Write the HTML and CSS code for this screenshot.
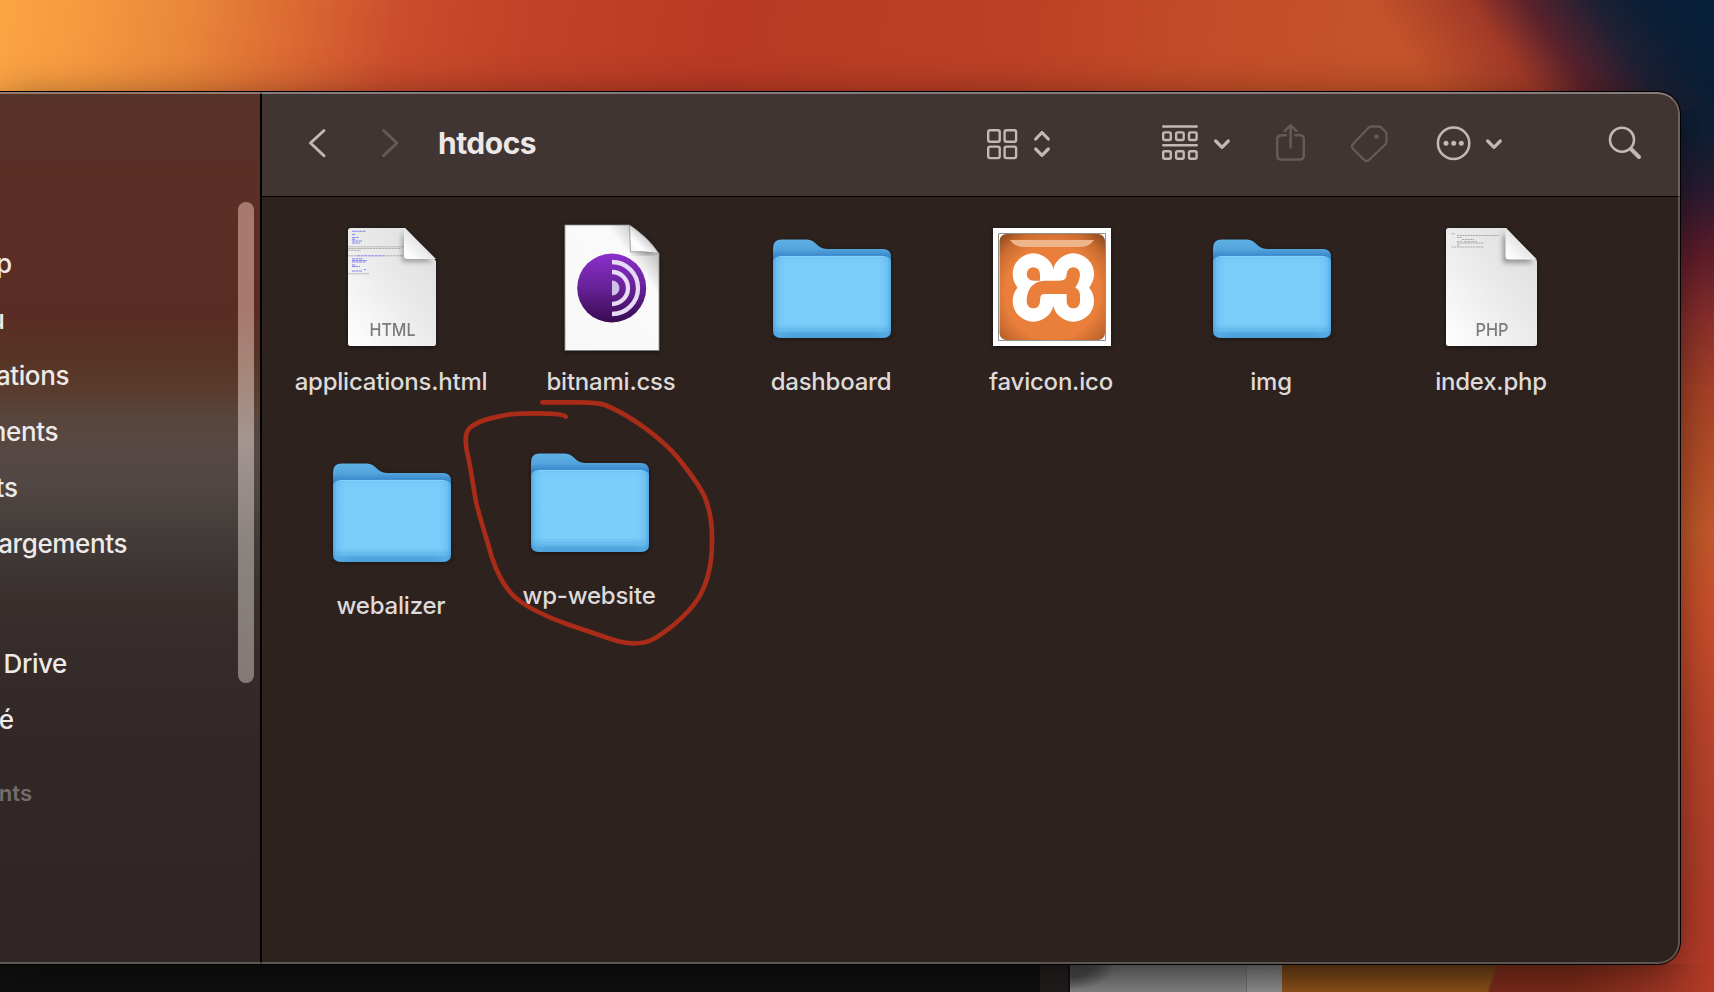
FILE: index.html
```html
<!DOCTYPE html>
<html lang="fr">
<head>
<meta charset="utf-8">
<title>htdocs</title>
<link rel="stylesheet" href="styles.css">
</head>
<body class="desktop">
<svg class="defs" width="0" height="0">
  <defs>
    <linearGradient id="back" gradientUnits="userSpaceOnUse" x1="0" y1="16" x2="0" y2="38"><stop offset="0" stop-color="#5fb0e3"/><stop offset=".45" stop-color="#54a5de"/><stop offset=".8" stop-color="#3785c9"/><stop offset="1" stop-color="#3785c9"/></linearGradient>
    <linearGradient id="front" x1="0" y1="0" x2="0" y2="1"><stop offset="0" stop-color="#74c6f6"/><stop offset=".1" stop-color="#7bcdfa"/><stop offset=".83" stop-color="#7bcdfa"/><stop offset=".845" stop-color="#74c6f5"/><stop offset=".87" stop-color="#74c6f5"/><stop offset=".875" stop-color="#64b8ea"/><stop offset=".895" stop-color="#6abded"/><stop offset=".93" stop-color="#5eb2e6"/><stop offset=".935" stop-color="#54a8df"/><stop offset="1" stop-color="#4a9fda"/></linearGradient>
    <linearGradient id="side" x1="0" y1="0" x2="1" y2="0"><stop offset="0" stop-color="#3f98d8" stop-opacity=".75"/><stop offset=".03" stop-color="#55ade6" stop-opacity=".4"/><stop offset=".12" stop-color="#7bcdfa" stop-opacity="0"/><stop offset=".88" stop-color="#7bcdfa" stop-opacity="0"/><stop offset=".97" stop-color="#55ade6" stop-opacity=".4"/><stop offset="1" stop-color="#3f98d8" stop-opacity=".75"/></linearGradient>
    <linearGradient id="paper" x1="1" y1="0" x2="0" y2="1"><stop offset="0" stop-color="#dcdcdc"/><stop offset=".5" stop-color="#ebebeb"/><stop offset="1" stop-color="#fff"/></linearGradient>
    <linearGradient id="fold" x1="1" y1="0" x2="0" y2="1"><stop offset=".4" stop-color="#dedede"/><stop offset=".8" stop-color="#fafafa"/><stop offset="1" stop-color="#fff"/></linearGradient>
    <linearGradient id="curl" x1="1" y1="0" x2="0" y2="1"><stop offset=".4" stop-color="#c8c8c8"/><stop offset=".7" stop-color="#fff"/><stop offset="1" stop-color="#f4f4f4"/></linearGradient>
    <linearGradient id="tor" x1="0" y1="0" x2="0" y2="1"><stop offset="0" stop-color="#8b2fcb"/><stop offset=".45" stop-color="#6b239c"/><stop offset="1" stop-color="#370b52"/></linearGradient>
    <linearGradient id="sheet" x1="1" y1="0" x2="0" y2="1"><stop offset=".15" stop-color="#c9c9c9"/><stop offset=".28" stop-color="#fafafa"/><stop offset="1" stop-color="#f8f8f8"/></linearGradient>
    <radialGradient id="xampp" cx=".5" cy=".55" r=".72"><stop offset=".62" stop-color="#e97f3b"/><stop offset=".82" stop-color="#c96b2f"/><stop offset="1" stop-color="#8d4a20"/></radialGradient>
    <filter id="soft" x="-30%" y="-30%" width="160%" height="160%"><feGaussianBlur stdDeviation="2.5"/></filter>
    <symbol id="folder" viewBox="0 0 128 128">
      <path fill="url(#back)" d="M6 25Q6 16.500 14.500 16.500H40C49 16.500 50 26 60 26H116Q124 26 124 34V60H6Z"/>
      <path fill="url(#front)" d="M6 40.500Q6 33 14 33H116Q124 33 124 40.500V107Q124 115 116 115H14Q6 115 6 107Z"/>
      <path fill="url(#side)" d="M6 40.500Q6 33 14 33H116Q124 33 124 40.500V107Q124 115 116 115H14Q6 115 6 107Z"/>
      <path stroke="#8fd6fb" stroke-width=".8" fill="none" d="M13 33.400H117"/>
    </symbol>
  </defs>
</svg>

<main class="window">
  <aside class="sidebar">
    <nav class="places">
      <div class="place w-airdrop">p</div>
      <div class="place w-bureau">u</div>
      <div class="place w-apps">ations</div>
      <div class="place w-docs">ments</div>
      <div class="place w-recents">ts</div>
      <div class="place w-downloads">argements</div>
      <div class="place w-drive">Drive</div>
      <div class="place w-shared">é</div>
      <div class="heading">nts</div>
    </nav>
    <div class="scrollbar"></div>
  </aside>

  <section class="content">
    <header class="toolbar">
      <svg class="ic back" width="20" height="40" viewBox="307 123 20 40"><path stroke-width="2.900" d="M324 130.500 310.500 143 324 155.700"/></svg>
      <svg class="ic dim forward" width="20" height="40" viewBox="380 123 20 40"><path stroke-width="2.900" d="M383.500 130.500 397 143 383.500 155.700"/></svg>
      <h1 class="title">htdocs</h1>
      <svg class="ic view" width="64" height="40" viewBox="987 123 64 40"><g stroke-width="2.400"><rect x="988.200" y="130.200" width="11.500" height="11.500" rx="1.800"/><rect x="1004.600" y="130.200" width="11.500" height="11.500" rx="1.800"/><rect x="988.200" y="146.600" width="11.500" height="11.500" rx="1.800"/><rect x="1004.600" y="146.600" width="11.500" height="11.500" rx="1.800"/></g><path stroke-width="3.200" d="M1035.700 139 1042 132.500 1048.300 139M1035.700 149 1042 155.300 1048.300 149"/></svg>
      <svg class="ic group" width="70" height="40" viewBox="1161 123 70 40"><path stroke-width="2.400" d="M1163.200 126.500H1196.800M1163.200 145.300H1196.800"/><g stroke-width="2.400"><rect x="1163.200" y="132.400" width="7.600" height="7.600" rx="1.500"/><rect x="1176.100" y="132.400" width="7.600" height="7.600" rx="1.500"/><rect x="1189" y="132.400" width="7.600" height="7.600" rx="1.500"/><rect x="1163.200" y="151.200" width="7.600" height="7.600" rx="1.500"/><rect x="1176.100" y="151.200" width="7.600" height="7.600" rx="1.500"/><rect x="1189" y="151.200" width="7.600" height="7.600" rx="1.500"/></g><path stroke-width="3.200" d="M1215.700 141 1222 147.300 1228.300 141"/></svg>
      <svg class="ic dim share" width="32" height="40" viewBox="1275 122 32 40"><path stroke-width="2.500" d="M1286 134.200H1281.500Q1277.200 134.200 1277.200 138.500V154.300Q1277.200 158.600 1281.500 158.600H1299.500Q1303.800 158.600 1303.800 154.300V138.500Q1303.800 134.200 1299.500 134.200H1295.200M1290.600 146.500V124.500M1284.700 130 1290.600 124.200 1296.500 130"/></svg>
      <svg class="ic dim tag" width="40" height="40" viewBox="1350 123 40 40"><path stroke-width="2.300" d="M1371 126.500H1378.500Q1380.500 126.500 1381.800 127.900L1385 131.200Q1386.500 132.800 1386.500 134.800V141.500Q1386.500 143.300 1385.300 144.500L1369 160Q1366.600 162 1364.200 160L1353 148.700Q1351 146.300 1353 144L1368.500 127.700Q1369.600 126.500 1371 126.500Z"/><circle cx="1376.500" cy="136.500" r="2.300" class="dot"/></svg>
      <svg class="ic more" width="68" height="40" viewBox="1436 123 68 40"><circle cx="1453.600" cy="143.200" r="15.700" stroke-width="2.500"/><circle class="dot" cx="1446" cy="143.300" r="2.500"/><circle class="dot" cx="1453.700" cy="143.300" r="2.500"/><circle class="dot" cx="1461.300" cy="143.300" r="2.500"/><path stroke-width="3.200" d="M1487.700 141 1494 147.300 1500.300 141"/></svg>
      <svg class="ic search" width="36" height="40" viewBox="1607 123 36 40"><circle cx="1622" cy="139.700" r="12" stroke-width="2.600"/><path stroke-width="4" d="M1631.500 149.500 1639 157"/></svg>
    </header>

    <div class="files">
      <figure class="file">
        <svg class="icon" width="128" height="128" viewBox="0 0 128 128">
          <path fill="url(#paper)" d="M23.500 5H78L109 38V120.500Q109 123 106.500 123H23.500Q21 123 21 120.500V7.500Q21 5 23.500 5Z"/>
          <g stroke-width=".9" fill="none"><path stroke="#7a7aea" stroke-dasharray="3 .5" d="M25 8.300H39M25 11.500H28M25 14.500H32M25 16.300H28M25 18H35M25 20H33M30 32.800H57M25 35.800H36M25 37.500H40M25 39H39M25 42H29M25 43.500H33M25 48H35"/><path stroke="#aaa" stroke-dasharray="2.500 .6" d="M21 23.800H77M21 25.500H74M21 27.300H34M21 32.800H30M57 32.800H77M21 50.800H42"/><path stroke="#2468c8" d="M37 46.500H38.500"/></g>
          <path filter="url(#soft)" opacity=".3" d="M75 10V39H106Z"/>
          <path fill="url(#fold)" d="M78 5 109 36H80Q77 36 77 33V6Z"/>
          <text class="kind" x="65.500" y="113" textLength="46" lengthAdjust="spacingAndGlyphs">HTML</text>
        </svg>
        <figcaption class="name">applications.html</figcaption>
      </figure>
      <figure class="file">
        <svg class="icon" width="128" height="128" viewBox="0 0 128 128">
          <path fill="url(#sheet)" stroke="#777" stroke-width=".8" d="M17.900 1.900H82L112.100 30V127.600H17.900Z"/>
          <path filter="url(#soft)" opacity=".4" d="M83 31H111L100 26Z"/>
          <path fill="url(#curl)" stroke="#8a8a8a" stroke-width=".8" d="M82.500 2C92 8 106 20 111.500 30.500Q97 28 83.500 28.800Z"/>
          <circle cx="64.700" cy="65" r="34.500" fill="url(#tor)"/>
          <g fill="none" stroke="#e6daf5" stroke-width="4.300"><path d="M65 39A26 26 0 0 1 65 91"/><path d="M65 49A16 16 0 0 1 65 81"/></g><path fill="#cfc0e6" d="M65 57.500A7.500 7.500 0 0 1 65 72.500Z"/>
        </svg>
        <figcaption class="name">bitnami.css</figcaption>
      </figure>
      <figure class="file">
        <svg class="icon" width="128" height="128"><use href="#folder"/></svg>
        <figcaption class="name">dashboard</figcaption>
      </figure>
      <figure class="file">
        <svg class="icon" width="128" height="128" viewBox="0 0 128 128">
          <path fill="#fff" d="M6 5H124V123H6Z"/>
          <path fill="none" stroke="#8f8f8f" stroke-width="1" d="M11.500 10.500H118.500V117.500H11.500Z"/>
          <rect x="12.500" y="11" width="105.500" height="106" rx="7" fill="url(#xampp)"/>
          <path fill="#efb489" d="M23 17H107Q102 24 94 24H36Q28 24 23 17Z"/>
          <g transform="translate(-247 -13) scale(.33333)">
            <g fill="#fff"><circle cx="880" cy="192" r="62"/><circle cx="880" cy="273" r="62"/><circle cx="1000" cy="192" r="62"/><circle cx="1000" cy="273" r="62"/><path d="M832 190H1048V274H832Z"/></g>
            <path fill="#e97f3b" d="M880 172A20 20 0 0 1 900 192V212H880A20 20 0 0 1 880 172Z"/>
            <path fill="none" stroke="#e97f3b" stroke-width="40" stroke-linecap="round" stroke-linejoin="round" d="M880 275Q880 232 915 232H985"/>
            <path fill="#e97f3b" d="M960 212Q980 212 980 192A20 20 0 0 1 1020 192Q1020 212 1006 233Q1020 240 1020 256V275A20 20 0 0 1 980 275V252H960Z"/>
          </g>
        </svg>
        <figcaption class="name">favicon.ico</figcaption>
      </figure>
      <figure class="file">
        <svg class="icon" width="128" height="128"><use href="#folder"/></svg>
        <figcaption class="name">img</figcaption>
      </figure>
      <figure class="file">
        <svg class="icon" width="128" height="128" viewBox="0 0 128 128">
          <path fill="url(#paper)" d="M21.500 5H79L110 38V120.500Q110 123 107.500 123H21.500Q19 123 19 120.500V7.500Q19 5 21.500 5Z"/>
          <path fill="none" stroke="#999" stroke-width=".8" stroke-dasharray="2 .7" d="M24.500 10.700H28M30 12.500H72M30 14.500H35M35 16.500H47M30 18.700H35M37 18.700H50M30 20H57M30 22H33M24.500 24H57"/>
          <path filter="url(#soft)" opacity=".35" d="M76 10V40H107Z"/>
          <path fill="url(#fold)" d="M79 5 110 36.500H82Q78.500 36.500 78.500 33V6Z"/>
          <text class="kind" x="65" y="113" textLength="33" lengthAdjust="spacingAndGlyphs">PHP</text>
        </svg>
        <figcaption class="name">index.php</figcaption>
      </figure>
      <figure class="file">
        <svg class="icon" width="128" height="128"><use href="#folder"/></svg>
        <figcaption class="name">webalizer</figcaption>
      </figure>
      <figure class="file moved">
        <svg class="icon" width="128" height="128"><use href="#folder"/></svg>
        <figcaption class="name">wp-website</figcaption>
      </figure>
    </div>
  </section>
</main>

<div class="behind">
  <div class="b-black"></div><div class="b-edge"></div><div class="b-gray"></div><div class="b-light"></div><div class="b-orange"></div>
</div>

<svg class="scribble" width="270" height="270" viewBox="0 0 810 810"><path d="M247 37H360C390 37 415 38 435 45C510 75 605 145 655 205C685 243 715 280 733 318C752 362 757 410 756 455C756 520 742 580 715 625C680 680 610 732 575 750C555 760 540 760 520 760C495 760 485 758 455 748L320 702C260 680 215 660 175 630C135 600 110 545 95 500C80 445 55 370 48 335C35 260 30 220 20 180C10 120 25 110 65 93C140 70 170 70 220 70C270 70 317 72 317 80"/></svg>
</body>
</html>
```
FILE: styles.css
```css
* { box-sizing: border-box; }

.desktop {
  margin: 0;
  width: 1714px;
  height: 992px;
  padding-top: 92px;
  overflow: hidden;
  position: relative;
  font-family: Inter, "Noto Sans", sans-serif;
  background:
    linear-gradient(55deg, rgba(162, 58, 40, 0) 190px, #a23a28 272px, #5a222c 318px, #1f2034 372px, #0a1e35 415px, #06203a 470px) 1214px 0 / 500px 110px no-repeat,
    linear-gradient(100deg, #fba544 0, #f69a40 80px, #e98639 190px, #dc6a33 290px, #c94c2c 400px, #c04228 520px, #b83a24 720px, #bb4026 1000px, #c34d28 1200px, #c4532a 1370px, #c4532a 1700px) 0 0 / 100% 110px no-repeat,
    linear-gradient(180deg, #0e1f35 0, #0e1f35 130px, #2a1b32 190px, #5c1c2b 250px, #8a2f2b 320px, #a84227 390px, #c4592a 530px, #ca4f2b 610px, #bb452b 720px, #b33e2a 860px, #b53a27 992px);
}

.window {
  position: relative;
  display: grid;
  grid-template-columns: 262px 1fr;
  width: 1680px;
  height: 872px;
  border-radius: 0 22px 22px 0;
  overflow: hidden;
  outline: 1px solid #000;
  box-shadow: 0 8px 42px rgba(0, 0, 0, .48);
}

/* Light rim around the window */
.window::after {
  content: "";
  position: absolute;
  inset: 0;
  border: 2px solid rgba(255, 250, 245, .24);
  border-top-color: rgba(255, 250, 245, .36);
  border-left: 0;
  border-radius: 0 22px 22px 0;
}

.sidebar {
  display: flex;
  justify-content: space-between;
  padding: 110px 6px 0 0;
  border-right: 2px solid #000;
  background: linear-gradient(180deg, #573227 0, #5a2f25 95px, #5a2d24 225px, #563424 265px, #5a3c2e 300px, #58453b 325px, #574844 355px, #504744 395px, #423a38 450px, #39302e 510px, #342b2a 570px, #302726 680px, #2f2625 872px);
}

.places { padding-top: 34px; }

.place {
  display: flex;
  justify-content: flex-end;
  height: 56px;
  line-height: 56px;
  font-size: 26px;
  font-weight: 500;
  color: #eeeae8;
  white-space: nowrap;
}
.w-airdrop { width: 12px; }
.w-bureau { width: 5px; }
.w-apps { width: 69px; letter-spacing: -.4px; }
.w-docs { width: 58px; letter-spacing: -.4px; }
.w-recents { width: 18px; }
.w-downloads { width: 127px; letter-spacing: -.4px; margin-bottom: 64px; }
.w-drive { width: 67px; letter-spacing: -.4px; }
.w-shared { width: 14px; }

.heading {
  display: flex;
  justify-content: flex-end;
  width: 32px;
  margin-top: 17px;
  line-height: 56px;
  font-size: 22px;
  font-weight: 600;
  color: #766c6a;
}

.scrollbar {
  width: 16px;
  height: 481px;
  border-radius: 8px;
  background: linear-gradient(180deg, #a8796d 0, #a87a6e 110px, #a58a7e 190px, #a39590 240px, #8b8380 340px, #837a78 481px);
}

.content { background: #2d221e; }

.toolbar {
  display: flex;
  align-items: center;
  height: 105px;
  padding: 0 37px 3px 45px;
  background: #403533;
  border-bottom: 1px solid #000;
}

.ic {
  flex: none;
  fill: none;
  stroke: #c3b8b5;
  stroke-linecap: round;
  stroke-linejoin: round;
  color: #c3b8b5;
}
.ic.dim { stroke: #655a58; color: #655a58; }
.dot { fill: currentColor; stroke: none; }
.forward { margin-left: 53px; }
.title {
  width: 549px;
  margin: 0 0 0 38px;
  padding-top: 1px;
  font-size: 30px;
  font-weight: 700;
  line-height: 36px;
  letter-spacing: -.5px;
  color: #ece8e7;
}
.group { margin-left: 110px; }
.share { margin-left: 44px; }
.tag { margin-left: 43px; }
.more { margin-left: 46px; }
.search { margin-left: 103px; }

.files {
  display: grid;
  grid-template-columns: repeat(6, 220px);
  grid-auto-rows: 224px;
  padding: 26px 0 0 19px;
}

.file {
  display: flex;
  flex-direction: column;
  align-items: center;
  margin: 0;
}
.moved { transform: translate(-22px, -10px); }

.icon { filter: drop-shadow(0 1px 2px rgba(0, 0, 0, .5)); }

.kind {
  font-size: 17.5px;
  font-weight: 500;
  fill: #7b7b7b;
  text-anchor: middle;
}

.name {
  margin-top: 15px;
  font-size: 24px;
  font-weight: 500;
  line-height: 32px;
  letter-spacing: -.22px;
  color: #dedad9;
  white-space: nowrap;
}

/* Windows and wallpaper showing under the window */
.behind {
  display: grid;
  grid-template-columns: 1040px 30px 176px 36px 1fr;
  height: 28px;
}
.b-black { background: #101010; }
.b-edge { background: #231d1d; border-right: 2px solid #111; }
.b-gray { background: radial-gradient(ellipse 46px 26px at 0 0, #484848 50%, transparent 100%), linear-gradient(180deg, #6b6b6b, #868686); }
.b-light { background: linear-gradient(180deg, #737373, #929292); border-left: 1px solid #6a6a6a; }
.b-orange {
  background:
    linear-gradient(90deg, transparent 290px, #b83c28 440px),
    linear-gradient(108deg, transparent 203px, #7a2b1a 206px),
    linear-gradient(180deg, #683c14, #8f531b);
}

.scribble {
  position: absolute;
  left: 460px;
  top: 390px;
  fill: none;
  stroke: #a82c18;
  stroke-width: 14;
  stroke-linecap: round;
}

.defs { position: absolute; }
```
